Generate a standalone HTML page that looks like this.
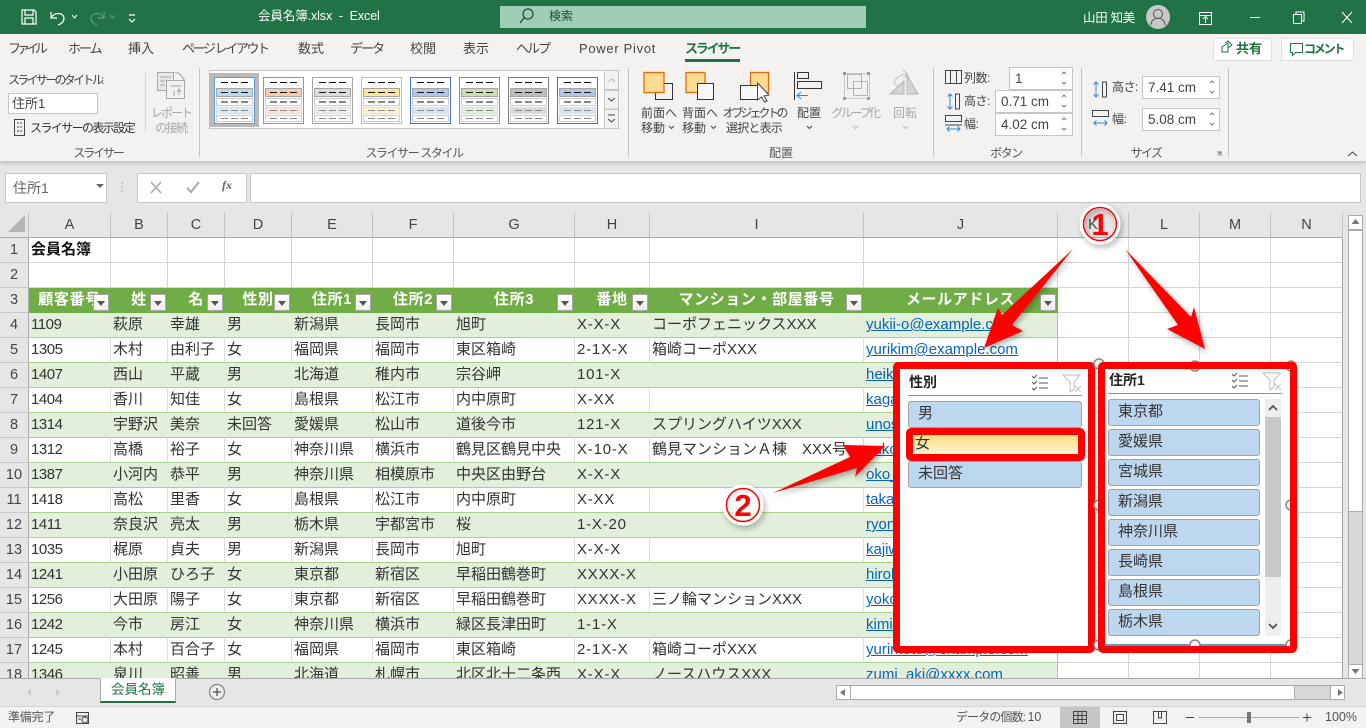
<!DOCTYPE html>
<html lang="ja"><head><meta charset="utf-8"><title>会員名簿</title>
<style>
*{box-sizing:border-box}
html,body{margin:0;padding:0;width:1366px;height:728px;overflow:hidden;background:#e6e6e6;font-family:"Liberation Sans","Noto Sans CJK JP",sans-serif;color:#333}
.a{position:absolute;white-space:nowrap;line-height:16px}
.r{font-size:12px;color:#444}
.t{font-size:13px;color:#444}
.c{transform:translateX(-50%);text-align:center}
.d{color:#a8a8a8}
.g{font-size:12px;color:#555}
.inp{position:absolute;background:#fff;border:1px solid #c6c6c6;font-size:13.5px;color:#444;padding:2px 0 0 5px;line-height:17px}
.sep{position:absolute;width:1px;top:68px;height:89px;background:#c8c6c4}
table{position:absolute;left:0;top:213px;border-collapse:separate;border-spacing:0;table-layout:fixed;width:1343px;font-size:15px;color:#333;background:#fff}
td,th{height:25px;padding:0 0 0 2px;border-right:1px solid #d4d4d4;border-bottom:1px solid #d4d4d4;overflow:hidden;white-space:nowrap;font-weight:400;line-height:24px}
td:first-child,th{background:#e6e6e6;text-align:center;padding:0;color:#444;border-right:1px solid #ababab;border-bottom:1px solid #ababab;font-size:14.5px}
th{border-right-color:#c0c0c0}
td:first-child{border-bottom-color:#c8c8c8}
td:nth-child(2){letter-spacing:-.45px}
td:nth-child(9){letter-spacing:.8px}
.b td{background:#e2efda;border-right-color:#e2efda;border-bottom-color:#a9d08e}
.w td{border-bottom-color:#a9d08e}
.w td:nth-child(n+2):nth-child(-n+10){border-right-color:#dcdcdc}
.b td:nth-child(11),.w td:nth-child(11){border-right-color:#a9d08e}
.b td:first-child,.w td:first-child{background:#e6e6e6;border-right-color:#ababab;border-bottom-color:#c8c8c8}
.b td:nth-child(n+12){background:#fff;border-right-color:#d4d4d4;border-bottom-color:#d4d4d4}
.w td:nth-child(n+12){border-right-color:#d4d4d4;border-bottom-color:#d4d4d4}
.h td{background:#70ad47;color:#fff;font-weight:700;text-align:center;border-right-color:#70ad47;border-bottom-color:#70ad47;letter-spacing:.6px;padding:0}
.h td:first-child{background:#e6e6e6;color:#444;font-weight:400;letter-spacing:0;padding:0;border-right-color:#ababab;border-bottom-color:#c8c8c8}
.h td:nth-child(n+12){background:#fff;border-right-color:#d4d4d4;border-bottom-color:#d4d4d4}
td.m{color:#0563c1;text-decoration:underline}
.f{position:absolute;top:294px;width:16px;height:17px;background:linear-gradient(#fff,#eee);border:1px solid #a6a6a6}
.f:after{content:"";position:absolute;left:3px;top:6px;border:4px solid transparent;border-top:5px solid #555;border-bottom:0}
.fr{position:absolute;border:7px solid #f00;border-radius:5px;top:362px;height:291px}
.bt{position:absolute;background:#bdd7ee;border:1px solid #97a3ad;border-radius:3px;font-size:15px;color:#333;padding-left:9px;line-height:24px;height:27px}
</style></head><body>

<!-- title bar -->
<div style="position:absolute;left:0;top:0;width:1366px;height:34px;background:#217346"></div>
<div style="position:absolute;left:500px;top:6px;width:366px;height:22px;background:#a0cdb5"></div>
<div class="a" style="left:258px;top:8px;font-size:12.5px;color:#fff;letter-spacing:-.1px">会員名簿.xlsx&nbsp; -&nbsp; Excel</div>
<div class="a" style="left:549px;top:8px;font-size:12px;color:#1d4d33">検索</div>
<div class="a" style="left:1083px;top:10px;font-size:12.5px;color:#fff;letter-spacing:-.3px">山田 知美</div>

<!-- ribbon -->
<div style="position:absolute;left:0;top:34px;width:1366px;height:127px;background:#f3f2f1;box-shadow:0 2px 4px rgba(0,0,0,.18)"></div>
<div class="a t" style="left:8px;top:41px;letter-spacing:-4px">ファイル</div>
<div class="a t" style="left:68px;top:41px;letter-spacing:-2px">ホーム</div>
<div class="a t" style="left:128px;top:41px">挿入</div>
<div class="a t" style="left:182px;top:41px;letter-spacing:-2.4px">ページ レイアウト</div>
<div class="a t" style="left:298px;top:41px">数式</div>
<div class="a t" style="left:350px;top:41px;letter-spacing:-2px">データ</div>
<div class="a t" style="left:410px;top:41px">校閲</div>
<div class="a t" style="left:463px;top:41px">表示</div>
<div class="a t" style="left:516px;top:41px;letter-spacing:-2px">ヘルプ</div>
<div class="a t" style="left:579px;top:41px;letter-spacing:.7px">Power Pivot</div>
<div class="a t" style="left:685px;top:41px;letter-spacing:-2.2px;color:#217346;font-weight:700">スライサー</div>
<div style="position:absolute;left:685px;top:59px;width:55px;height:3px;background:#217346"></div>
<div style="position:absolute;left:1213px;top:38px;width:59px;height:23px;background:#fff;border:1px solid #e1dfdd;border-radius:2px"></div>
<div style="position:absolute;left:1281px;top:38px;width:73px;height:23px;background:#fff;border:1px solid #e1dfdd;border-radius:2px"></div>
<div class="a" style="left:1236px;top:41px;font-size:13px;font-weight:700;color:#217346;letter-spacing:0">共有</div>
<div class="a" style="left:1304px;top:41px;font-size:12px;font-weight:700;color:#217346;letter-spacing:-2.2px">コメント</div>

<div class="a r" style="left:8px;top:72px;letter-spacing:-2.7px">スライサーのタイトル:</div>
<div class="inp" style="left:8px;top:93px;width:90px;height:21px;font-size:13px;padding:1px 0 0 3px">住所1</div>
<div class="a r" style="left:30px;top:120px;letter-spacing:-1.6px;color:#333">スライサーの表示設定</div>
<div class="a g" style="left:98px;top:145px;letter-spacing:-2.1px;transform:translateX(-50%)">スライサー</div>
<div class="sep" style="left:145px;top:73px;height:60px;background:#d8d6d4"></div>
<div class="a r d c" style="left:171px;top:105px;letter-spacing:-2px">レポート</div>
<div class="a r d c" style="left:171px;top:120px;letter-spacing:-1.4px">の接続</div>
<div class="sep" style="left:199px"></div>
<div style="position:absolute;left:209px;top:70px;width:410px;height:59px;background:#fff;border:1px solid #c8c6c4"></div>
<div style="position:absolute;left:209px;top:73px;width:50px;height:54px;background:#b9b9b9"></div>
<div class="a g" style="left:414px;top:145px;letter-spacing:-1.4px;transform:translateX(-50%)">スライサー スタイル</div>
<div class="sep" style="left:628px"></div>
<div class="a r" style="left:641px;top:105px">前面へ</div>
<div class="a r" style="left:641px;top:120px">移動</div>
<div class="a r" style="left:682px;top:105px">背面へ</div>
<div class="a r" style="left:682px;top:120px">移動</div>
<div class="a r c" style="left:754px;top:105px;letter-spacing:-3px">オブジェクトの</div>
<div class="a r c" style="left:754px;top:120px;letter-spacing:-.8px">選択と表示</div>
<div class="a r c" style="left:809px;top:105px">配置</div>
<div class="a r d c" style="left:855px;top:105px;letter-spacing:-2.4px">グループ化</div>
<div class="a r d c" style="left:905px;top:105px">回転</div>
<div class="a g" style="left:781px;top:145px;transform:translateX(-50%)">配置</div>
<div class="sep" style="left:933px"></div>
<div class="a r" style="left:964px;top:70px;letter-spacing:-.5px">列数:</div>
<div class="a r" style="left:964px;top:93px;letter-spacing:-.5px">高さ:</div>
<div class="a r" style="left:964px;top:116px;letter-spacing:-.5px">幅:</div>
<div class="inp" style="left:1009px;top:67px;width:64px;height:23px">1</div>
<div class="inp" style="left:995px;top:90px;width:78px;height:23px">0.71 cm</div>
<div class="inp" style="left:995px;top:113px;width:78px;height:23px">4.02 cm</div>
<div class="a g" style="left:1006px;top:145px;letter-spacing:-1.4px;transform:translateX(-50%)">ボタン</div>
<div class="sep" style="left:1081px"></div>
<div class="a r" style="left:1112px;top:79px;letter-spacing:-.5px">高さ:</div>
<div class="a r" style="left:1112px;top:111px;letter-spacing:-.5px">幅:</div>
<div class="inp" style="left:1142px;top:76px;width:78px;height:23px">7.41 cm</div>
<div class="inp" style="left:1142px;top:108px;width:78px;height:23px">5.08 cm</div>
<div class="a g" style="left:1146px;top:145px;letter-spacing:-1.6px;transform:translateX(-50%)">サイズ</div>
<div class="sep" style="left:1228px"></div>

<!-- formula bar -->
<div style="position:absolute;left:5px;top:173px;width:102px;height:30px;background:#fff;border:1px solid #c6c6c6"></div>
<div class="a" style="left:13px;top:180px;font-size:14px;color:#666">住所1</div>
<div style="position:absolute;left:137px;top:173px;width:110px;height:30px;background:#fff;border:1px solid #c6c6c6"></div>
<div style="position:absolute;left:250px;top:173px;width:1111px;height:30px;background:#fff;border:1px solid #c6c6c6"></div>
<div class="a" style="left:222px;top:178px;font:italic 700 12px 'Liberation Serif',serif;color:#666">fx</div>

<!-- grid -->
<table>
<colgroup><col style="width:29px"><col style="width:82px"><col style="width:57px"><col style="width:57px"><col style="width:67px"><col style="width:81px"><col style="width:81px"><col style="width:121px"><col style="width:75px"><col style="width:214px"><col style="width:194px"><col style="width:71px"><col style="width:71px"><col style="width:71px"><col style="width:72px"></colgroup>
<tr><th></th><th>A</th><th>B</th><th>C</th><th>D</th><th>E</th><th>F</th><th>G</th><th>H</th><th>I</th><th>J</th><th>K</th><th>L</th><th>M</th><th>N</th></tr>
<tr><td>1</td><td style="font-weight:700;color:#111;overflow:visible;letter-spacing:0">会員名簿</td><td></td><td></td><td></td><td></td><td></td><td></td><td></td><td></td><td></td><td></td><td></td><td></td><td></td></tr>
<tr><td>2</td><td></td><td></td><td></td><td></td><td></td><td></td><td></td><td></td><td></td><td></td><td></td><td></td><td></td><td></td></tr>
<tr class="h"><td>3</td><td>顧客番号</td><td>姓</td><td>名</td><td>性別</td><td>住所1</td><td>住所2</td><td>住所3</td><td>番地</td><td>マンション・部屋番号</td><td>メールアドレス</td><td></td><td></td><td></td><td></td></tr>
<tr class="b"><td>4</td><td>1109</td><td>萩原</td><td>幸雄</td><td>男</td><td>新潟県</td><td>長岡市</td><td>旭町</td><td>X-X-X</td><td>コーポフェニックスXXX</td><td class="m">yukii-o@example.com</td><td></td><td></td><td></td><td></td></tr>
<tr class="w"><td>5</td><td>1305</td><td>木村</td><td>由利子</td><td>女</td><td>福岡県</td><td>福岡市</td><td>東区箱崎</td><td>2-1X-X</td><td>箱崎コーポXXX</td><td class="m">yurikim@example.com</td><td></td><td></td><td></td><td></td></tr>
<tr class="b"><td>6</td><td>1407</td><td>西山</td><td>平蔵</td><td>男</td><td>北海道</td><td>稚内市</td><td>宗谷岬</td><td>101-X</td><td></td><td class="m">heikichi@example.com</td><td></td><td></td><td></td><td></td></tr>
<tr class="w"><td>7</td><td>1404</td><td>香川</td><td>知佳</td><td>女</td><td>島根県</td><td>松江市</td><td>内中原町</td><td>X-XX</td><td></td><td class="m">kagawa@example.com</td><td></td><td></td><td></td><td></td></tr>
<tr class="b"><td>8</td><td>1314</td><td>宇野沢</td><td>美奈</td><td>未回答</td><td>愛媛県</td><td>松山市</td><td>道後今市</td><td>121-X</td><td>スプリングハイツXXX</td><td class="m">unosawa@example.com</td><td></td><td></td><td></td><td></td></tr>
<tr class="w"><td>9</td><td>1312</td><td>高橋</td><td>裕子</td><td>女</td><td>神奈川県</td><td>横浜市</td><td>鶴見区鶴見中央</td><td>X-10-X</td><td>鶴見マンションＡ棟　XXX号</td><td class="m">yuko@example.com</td><td></td><td></td><td></td><td></td></tr>
<tr class="b"><td>10</td><td>1387</td><td>小河内</td><td>恭平</td><td>男</td><td>神奈川県</td><td>相模原市</td><td>中央区由野台</td><td>X-X-X</td><td></td><td class="m">oko_k@example.com</td><td></td><td></td><td></td><td></td></tr>
<tr class="w"><td>11</td><td>1418</td><td>高松</td><td>里香</td><td>女</td><td>島根県</td><td>松江市</td><td>内中原町</td><td>X-XX</td><td></td><td class="m">takamatsu@example.com</td><td></td><td></td><td></td><td></td></tr>
<tr class="b"><td>12</td><td>1411</td><td>奈良沢</td><td>亮太</td><td>男</td><td>栃木県</td><td>宇都宮市</td><td>桜</td><td>1-X-20</td><td></td><td class="m">ryonara@example.com</td><td></td><td></td><td></td><td></td></tr>
<tr class="w"><td>13</td><td>1035</td><td>梶原</td><td>貞夫</td><td>男</td><td>新潟県</td><td>長岡市</td><td>旭町</td><td>X-X-X</td><td></td><td class="m">kajiwara@example.com</td><td></td><td></td><td></td><td></td></tr>
<tr class="b"><td>14</td><td>1241</td><td>小田原</td><td>ひろ子</td><td>女</td><td>東京都</td><td>新宿区</td><td>早稲田鶴巻町</td><td>XXXX-X</td><td></td><td class="m">hiroko@example.com</td><td></td><td></td><td></td><td></td></tr>
<tr class="w"><td>15</td><td>1256</td><td>大田原</td><td>陽子</td><td>女</td><td>東京都</td><td>新宿区</td><td>早稲田鶴巻町</td><td>XXXX-X</td><td>三ノ輪マンションXXX</td><td class="m">yoko@example.com</td><td></td><td></td><td></td><td></td></tr>
<tr class="b"><td>16</td><td>1242</td><td>今市</td><td>房江</td><td>女</td><td>神奈川県</td><td>横浜市</td><td>緑区長津田町</td><td>1-1-X</td><td></td><td class="m">kimi@example.com</td><td></td><td></td><td></td><td></td></tr>
<tr class="w"><td>17</td><td>1245</td><td>本村</td><td>百合子</td><td>女</td><td>福岡県</td><td>福岡市</td><td>東区箱崎</td><td>2-1X-X</td><td>箱崎コーポXXX</td><td class="m">yurimoto@example.com</td><td></td><td></td><td></td><td></td></tr>
<tr class="b"><td>18</td><td>1346</td><td>泉川</td><td>昭善</td><td>男</td><td>北海道</td><td>札幌市</td><td>北区北十二条西</td><td>X-X-X</td><td>ノースハウスXXX</td><td class="m">zumi_aki@xxxx.com</td><td></td><td></td><td></td><td></td></tr>
</table>
<div class="f" style="left:93px"></div><div class="f" style="left:150px"></div><div class="f" style="left:207px"></div><div class="f" style="left:274px"></div><div class="f" style="left:355px"></div><div class="f" style="left:436px"></div><div class="f" style="left:557px"></div><div class="f" style="left:632px"></div><div class="f" style="left:846px"></div><div class="f" style="left:1040px"></div>

<!-- sheet tabs / scrollbars / status -->
<div style="position:absolute;left:0;top:678px;width:1366px;height:28px;background:#e6e6e6;border-top:1px solid #a8a8a8"></div>
<div style="position:absolute;left:100px;top:678px;width:76px;height:25px;background:#fff;border:1px solid #a8a8a8;border-top-color:#fff;border-bottom:2px solid #217346;color:#217346;font-size:13.5px;text-align:center;line-height:22px">会員名簿</div>
<div style="position:absolute;left:1344px;top:213px;width:22px;height:465px;background:#e6e6e6"></div>
<div style="position:absolute;left:1342px;top:238px;width:1px;height:440px;background:#ababab"></div>
<div style="position:absolute;left:1348px;top:215px;width:15px;height:463px;background:#d8d8d8;border:1px solid #ababab"></div>
<div style="position:absolute;left:1348px;top:230px;width:15px;height:282px;background:#fff;border:1px solid #ababab"></div>
<div style="position:absolute;left:1348px;top:215px;width:15px;height:15px;background:#fff;border:1px solid #ababab"></div>
<div style="position:absolute;left:1348px;top:664px;width:15px;height:15px;background:#fff;border:1px solid #ababab"></div>
<div style="position:absolute;left:836px;top:685px;width:509px;height:15px;background:#d8d8d8;border:1px solid #ababab"></div>
<div style="position:absolute;left:850px;top:685px;width:445px;height:15px;background:#fff;border:1px solid #ababab"></div>
<div style="position:absolute;left:836px;top:685px;width:15px;height:15px;background:#fff;border:1px solid #ababab"></div>
<div style="position:absolute;left:1330px;top:685px;width:15px;height:15px;background:#fff;border:1px solid #ababab"></div>
<div style="position:absolute;left:0;top:706px;width:1366px;height:22px;background:#f3f2f1;border-top:1px solid #d4d4d4"></div>
<div style="position:absolute;left:1060px;top:707px;width:40px;height:21px;background:#c6c6c6"></div>
<div class="a" style="left:8px;top:709px;font-size:12px;color:#555;letter-spacing:-.2px">準備完了</div>
<div class="a" style="left:956px;top:709px;font-size:12px;color:#555;letter-spacing:-.9px">データの個数: <span style="letter-spacing:0;font-size:12.5px">10</span></div>
<div class="a" style="left:1325px;top:709px;font-size:12.5px;color:#555">100%</div>

<!-- ribbon and chrome icons -->
<svg style="position:absolute;left:0;top:0" width="1366" height="728" fill="none">
<defs><g id="th"><rect x=".5" y=".5" width="40" height="46" fill="#fff" stroke="var(--a)"/><rect x="2.5" y="11.5" width="36" height="8" fill="var(--b)" stroke="#a5a5a5"/><rect x="2.5" y="21.5" width="36" height="7" fill="#fff" stroke="#ccc"/><rect x="2.5" y="30.5" width="36" height="6" fill="var(--c)" stroke="#ddd"/><rect x="2.5" y="38.5" width="36" height="6" fill="#fff" stroke="#ccc"/><path d="M7 5.5h7m3 0h7m3 0h7M7 15.5h7m3 0h7m3 0h7M7 25h7m3 0h7m3 0h7" stroke="#111"/><path d="M7 33.500h7m3 0h7m3 0h7M7 41.500h7m3 0h7m3 0h7" stroke="#888"/></g></defs>
<use href="#th" x="214" y="77" style="--a:#5b9bd5;--b:#bdd7ee;--c:#deebf7"/>
<use href="#th" x="263" y="77" style="--a:#ed7d31;--b:#f8cbad;--c:#fbe5d6"/>
<use href="#th" x="312" y="77" style="--a:#a5a5a5;--b:#dbdbdb;--c:#ededed"/>
<use href="#th" x="361" y="77" style="--a:#ffc000;--b:#ffe699;--c:#fff2cc"/>
<use href="#th" x="410" y="77" style="--a:#4472c4;--b:#b4c6e7;--c:#dae3f3"/>
<use href="#th" x="459" y="77" style="--a:#70ad47;--b:#c6e0b4;--c:#e2efda"/>
<use href="#th" x="508" y="77" style="--a:#7f7f7f;--b:#bfbfbf;--c:#d9d9d9"/>
<use href="#th" x="557" y="77" style="--a:#4472c4;--b:#b4c6e7;--c:#dae3f3"/>
<g stroke="#c8c6c4" fill="#f3f2f1"><rect x="604.500" y="70.500" width="14" height="19"/><rect x="604.500" y="90.500" width="14" height="18.500"/><rect x="604.500" y="109.500" width="14" height="19"/></g>
<path d="M608 82l3.500-3 3.500 3" stroke="#bbb"/><path d="M608 98l3.500 3 3.500-3M608 115h7M608 119l3.500 3 3.500-3" stroke="#444"/>
<!-- title icons -->
<g stroke="#fff" stroke-width="1.200"><path d="M22 10h12l2 2v12H22zM25 10v5h8v-5M25 24v-6h8v6"/><path d="M51 12v6h6M51 18c3-6 12-6 13 0 0 4-3 6-6 7"/><path d="M72 15l2.500 3 2.500-3" stroke-width="1"/><path d="M129 19l3 3 3-3M129 15h6" stroke-width="1.200"/></g>
<g stroke="#5d9979" stroke-width="1.200"><path d="M104 12v6h-6M104 18c-3-6-12-6-13 0 0 4 3 6 6 7"/><path d="M110 15l2.500 3 2.500-3" stroke-width="1"/></g>
<circle cx="528" cy="14" r="5" stroke="#1d4d33" stroke-width="1.200"/><path d="M524 18l-4 5" stroke="#1d4d33" stroke-width="1.400"/>
<circle cx="1158" cy="17" r="12" fill="#c8c8c8"/><circle cx="1158" cy="14" r="4.500" stroke="#555"/><path d="M1151 25c0-9 14-9 14 0" stroke="#555"/>
<g stroke="#fff"><path d="M1199.500 12.500h12v12h-12zM1199.500 15.500h12M1205.500 23v-6M1203 19l2.500-2.500 2.500 2.500"/><path d="M1250 17.500h10M1293.500 14.500h8v9h-8zM1296 14.500v-2.500h8v9h-2.500M1342 12l10 11M1352 12l-10 11"/></g>
<g stroke="#217346"><path d="M1222 47l6-4v9h-6zM1225 43l3-2 4 4-4 3"/><path d="M1290.500 43.500h12v9h-7l-3 3v-3h-2z"/></g>
<!-- left ribbon icons -->
<rect x="14.500" y="119.500" width="10" height="16" stroke="#444"/><path d="M17 123h2m1 0h2M17 127h2m1 0h2M17 131h2m1 0h2" stroke="#444"/>
<g stroke="#a8a8a8"><rect x="157.500" y="72.500" width="16" height="18" fill="#e8e8e8"/><rect x="166.500" y="80.500" width="18" height="18" fill="#f3f2f1"/><path d="M160 77h11M160 81h5M160 85h5M170 86h12M174 90v6M179 95v-6M177 92l2-3 2 3"/><path d="M175 72l5 2 5 7" stroke-width="1.200"/></g>
<!-- arrangement icons -->
<path d="M664 83.500h8.500v16h-17V92" stroke="#333"/><rect x="644" y="72.500" width="20" height="20" fill="#fbdc92" stroke="#e36c09" stroke-width="1.300"/>
<rect x="686" y="72.500" width="19" height="20" fill="#fbdc92" stroke="#e36c09" stroke-width="1.300"/><rect x="697.500" y="83.500" width="16" height="16" fill="#f8f8f8" stroke="#333"/>
<rect x="750.500" y="72.500" width="18" height="20" fill="#fbdc92" stroke="#e36c09" stroke-width="1.300"/><rect x="740.500" y="85.500" width="17" height="14" fill="#f8f8f8" stroke="#333"/>
<path d="M757.500 83v17l4-3 3 5 2.500-1-3-5 5-1z" fill="#fff" stroke="#444"/>
<path d="M794.500 72v28" stroke="#333"/><rect x="797.500" y="72.500" width="11" height="6" stroke="#333"/><rect x="797.500" y="81.500" width="24" height="7" stroke="#333"/><path d="M808 95.500h-11M801 92l-4 3.500 4 3.500" stroke="#2b88d8"/>
<g stroke="#b4b4b4"><rect x="847.500" y="74.500" width="14" height="14"/><rect x="853.500" y="81.500" width="14" height="14"/><path d="M846 73.500h21M846 98.500h21M844.500 75v22M869.500 75v22" stroke="#c8c8c8"/></g>
<g fill="#999"><rect x="843" y="72" width="3" height="3"/><rect x="867" y="72" width="3" height="3"/><rect x="843" y="97" width="3" height="3"/><rect x="867" y="97" width="3" height="3"/></g>
<path d="M890 94l14-13v13zM907 75l11 19h-11z" fill="#d4d4d4" stroke="#b4b4b4"/><path d="M903 70l5 4-5 4M907 74c-6 0-12 4-13 9l4 4" stroke="#c0c0c0"/>
<path d="M669 126l2.500 2.500 2.500-2.500M711 126l2.500 2.500 2.500-2.500M807 126l2.500 2.500 2.500-2.500" stroke="#444"/><path d="M853 126l2.500 2.500 2.500-2.500M903 126l2.500 2.500 2.500-2.500" stroke="#bbb"/>
<!-- spin chevrons -->
<path d="M1062 74l2-2 2 2M1062 82l2 2 2-2M1062 97l2-2 2 2M1062 105l2 2 2-2M1062 120l2-2 2 2M1062 128l2 2 2-2M1210 83l2-2 2 2M1210 91l2 2 2-2M1210 115l2-2 2 2M1210 123l2 2 2-2" stroke="#777"/>
<!-- button and size icons -->
<g stroke="#444"><path d="M945.500 70.500h16v13h-16zM950.500 70.500v13M956.500 70.500v13"/><path d="M955.500 94h4v15h-4z"/><path d="M945.500 115.500h16v6h-16zM945 125h17" stroke="#444"/><path d="M1102.500 82h4v15h-4z"/><path d="M1092.500 110.500h16v6h-16z"/></g>
<g stroke="#2b88d8"><path d="M950 94v15M947.500 96.500L950 94l2.500 2.500M947.500 106.500L950 109l2.500-2.500M947 129h13M949.500 126.500L947 129l2.500 2.500M957.500 126.500L960 129l-2.500 2.500"/><path d="M1096 82v15M1093.500 84.500L1096 82l2.500 2.500M1093.500 94.500L1096 97l2.500-2.500M1094 123h13M1096.500 120.500L1094 123l2.500 2.500M1104.500 120.500L1107 123l-2.500 2.500"/></g>
<path d="M1217 152h4v4M1218 155l3-3" stroke="#777"/><path d="M1348 156l4.500-4 4.500 4" stroke="#444"/>
<path d="M96 184l4 4 4-4z" fill="#666"/><path d="M122 182.500v1M122 186.500v1M122 190.500v1" stroke="#999" stroke-width="1.500"/>
<path d="M151 182l10 11M161 182l-10 11" stroke="#aaa" stroke-width="1.500"/><path d="M187 188l4 4 8-10" stroke="#aaa" stroke-width="2"/>
<path d="M8 232l17-17v17z" fill="#b5b5b5"/>
<path d="M1355.500 219l-4 5h8zM1355.500 674l-4-5h8zM1338 689l5 3.500-5 3.500zM845 689l-5 3.500 5 3.500z" fill="#777"/>
<path d="M31 689l-4 3.500 4 3.500zM56 689l4 3.500-4 3.500z" fill="#ccc"/>
<circle cx="217" cy="692" r="7.500" fill="#eee" stroke="#888" stroke-width="1.300"/><path d="M213 692h8M217 688v8" stroke="#666" stroke-width="1.500"/>
<g stroke="#444"><rect x="76.500" y="712.500" width="12" height="11"/><path d="M76 716h12M78 719h3"/><circle cx="85" cy="720" r="3" fill="#f3f2f1"/></g>
<path d="M1073.500 711.500h13v12h-13zM1078 711.500v12M1082 711.500v12M1073.500 715.500h13M1073.500 719.500h13M1113.500 711.500h13v12h-13zM1116.500 714.500h7v6h-7zM1153.500 711.500h13v12h-13zM1158.500 712v6h3v-6M1186 717.500h8M1303 717.500h8M1307 713.500v8" stroke="#444"/>
<path d="M1199 717.500h100" stroke="#aaa"/><rect x="1247" y="712" width="4" height="11" fill="#777"/>
</svg>

<!-- slicers -->
<div class="fr" style="left:893px;width:202px;background:#fff"></div>
<div class="a" style="left:909px;top:374px;font-size:14px;font-weight:700;color:#222">性別</div>
<div style="position:absolute;left:908px;top:395px;width:174px;height:1px;background:#6a9bc6"></div>
<div class="bt" style="left:908px;top:401px;width:174px">男</div>
<div class="bt" style="left:908px;top:461px;width:174px">未回答</div>
<div style="position:absolute;left:906px;top:428px;width:179px;height:33px;border:7px solid #f00;border-radius:5px;background:linear-gradient(#f8df85,#fdf3cf);font-size:15px;line-height:18px;padding-left:2px;color:#333">女</div>

<div style="position:absolute;left:1099px;top:363px;width:197px;height:285px;background:#fff;border:1px solid #ddd"></div>
<div style="position:absolute;left:1105px;top:644px;width:183px;height:2px;background:#5b9bd5"></div>
<svg style="position:absolute;left:0;top:0" width="1366" height="728" fill="none">
<g fill="#f2f2f2" stroke="#888" stroke-width="1.500"><circle cx="1099" cy="364" r="5"/><circle cx="1195" cy="366" r="5"/><circle cx="1291" cy="366" r="5"/><circle cx="1099" cy="505" r="5"/><circle cx="1291" cy="505" r="5"/><circle cx="1099" cy="645" r="5"/><circle cx="1195" cy="645" r="5"/><circle cx="1291" cy="645" r="5"/></g>
</svg>
<div class="fr" style="left:1098px;width:199px"></div>
<div class="a" style="left:1109px;top:372px;font-size:14px;font-weight:700;color:#222">住所1</div>
<div style="position:absolute;left:1108px;top:393px;width:174px;height:1px;background:#6a9bc6"></div>
<div class="bt" style="left:1108px;top:399px;width:152px">東京都</div>
<div class="bt" style="left:1108px;top:429px;width:152px">愛媛県</div>
<div class="bt" style="left:1108px;top:459px;width:152px">宮城県</div>
<div class="bt" style="left:1108px;top:489px;width:152px">新潟県</div>
<div class="bt" style="left:1108px;top:519px;width:152px">神奈川県</div>
<div class="bt" style="left:1108px;top:549px;width:152px">長崎県</div>
<div class="bt" style="left:1108px;top:579px;width:152px">島根県</div>
<div class="bt" style="left:1108px;top:609px;width:152px">栃木県</div>
<div style="position:absolute;left:1265px;top:399px;width:16px;height:237px;background:#eee"></div>
<div style="position:absolute;left:1265px;top:417px;width:16px;height:160px;background:#c8c8c8"></div>

<!-- annotations -->
<svg style="position:absolute;left:0;top:0" width="1366" height="728" fill="none">
<defs><filter id="s" x="-30%" y="-30%" width="160%" height="160%"><feDropShadow dx="2" dy="3" stdDeviation="3" flood-color="#000" flood-opacity=".3"/></filter></defs>
<g stroke="#555"><path d="M1032 376l2 2 3-3M1032 382l2 2 3-3M1032 388l2 2 3-3M1039 378h9M1039 383h9M1039 388h9"/><path d="M1232 374l2 2 3-3M1232 380l2 2 3-3M1232 386l2 2 3-3M1239 376h9M1239 381h9M1239 386h9"/></g>
<g stroke="#bbb"><path d="M1063 375h17l-6 7v7l-4 3v-10z"/><path d="M1263 373h17l-6 7v7l-4 3v-10z"/></g>
<path d="M1075 386l6 6M1081 386l-6 6M1275 384l6 6M1281 384l-6 6" stroke="#ccc" stroke-width="1.300"/>
<path d="M1269 410l4-4 4 4M1269 624l4 4 4-4" stroke="#555" stroke-width="1.800"/>
<g fill="#f00" filter="url(#s)"><path d="M1073 249L1002 315 998 308 984 348 1023 331 1012 325z"/><path d="M1125 249L1191 317 1194 307 1205 349 1167 329 1178 325z"/><path d="M773 493L850 457 843 445 885 446 855 477 857 468z"/></g>
<g filter="url(#s)"><circle cx="1100" cy="224" r="18" stroke="#fff" stroke-width="5"/><circle cx="743" cy="505" r="18" stroke="#fff" stroke-width="5"/></g>
<circle cx="743" cy="505" r="16" fill="#fff" fill-opacity=".7"/>
<circle cx="1100" cy="224" r="16.500" stroke="#f00" stroke-width="1.500"/><circle cx="743" cy="505" r="16.500" stroke="#f00" stroke-width="1.500"/>
<text x="1100" y="235" text-anchor="middle" font-family="Liberation Sans,sans-serif" font-size="31" font-weight="700" fill="#f00">1</text>
<text x="743" y="516" text-anchor="middle" font-family="Liberation Sans,sans-serif" font-size="31" font-weight="700" fill="#f00">2</text>
</svg>
</body></html>
